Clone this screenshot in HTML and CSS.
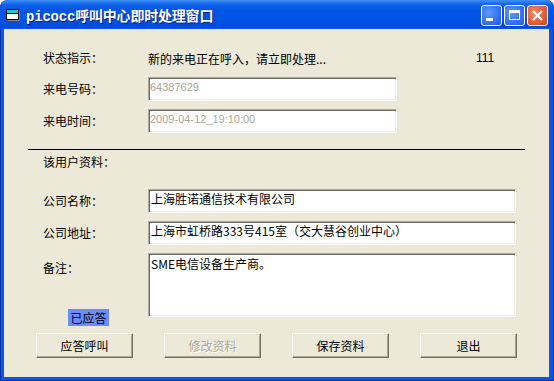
FILE: index.html
```html
<!DOCTYPE html>
<html lang="zh-CN">
<head>
    <meta charset="UTF-8">
    <title>picocc呼叫中心即时处理窗口</title>
    <link rel="stylesheet" href="styles.css">
</head>
<body>
    <div class="window">
        <div class="titlebar">
            <svg class="app-icon" width="16" height="16" viewBox="0 0 16 16">
                <rect x="3" y="4" width="12" height="10" fill="#808080"/>
                <rect x="1.5" y="2.5" width="12" height="10" fill="#fff" stroke="#000"/>
                <rect x="2" y="3" width="11" height="3" fill="#1fc8c8"/>
                <line x1="2" y1="6.5" x2="13" y2="6.5" stroke="#000"/>
            </svg>
            <span class="title">picocc呼叫中心即时处理窗口</span>
            <div class="caption-buttons">
                <span class="cap-btn">
                    <svg width="21" height="21" viewBox="0 0 21 21"><rect x="5" y="13" width="7" height="3" fill="#fff"/></svg>
                </span>
                <span class="cap-btn">
                    <svg width="21" height="21" viewBox="0 0 21 21"><rect x="5.5" y="5.5" width="10" height="9" fill="none" stroke="#fff"/><rect x="5" y="5" width="11" height="3" fill="#fff"/></svg>
                </span>
                <span class="cap-btn close">
                    <svg width="21" height="21" viewBox="0 0 21 21"><path d="M6 6 L15 15 M15 6 L6 15" stroke="#fff" stroke-width="2.2"/></svg>
                </span>
            </div>
        </div>

        <div class="client">
            <div class="row status-row">
                <span class="label">状态指示：</span>
                <span class="status-text">新的来电正在呼入，请立即处理...</span>
                <span class="counter">111</span>
            </div>
            <div class="row">
                <span class="label">来电号码：</span>
                <div class="textbox short disabled">64387629</div>
            </div>
            <div class="row gap">
                <span class="label">来电时间：</span>
                <div class="textbox short disabled">2009-04-12_19:10:00</div>
            </div>

            <hr class="divider">

            <div class="section-title">该用户资料：</div>

            <div class="row company">
                <span class="label">公司名称：</span>
                <div class="textbox wide">上海胜诺通信技术有限公司</div>
            </div>
            <div class="row gap">
                <span class="label">公司地址：</span>
                <div class="textbox wide">上海市虹桥路333号415室（交大慧谷创业中心）</div>
            </div>
            <div class="row gap notes-row">
                <div class="label-col">
                    <span class="label">备注：</span>
                    <span class="badge">已应答</span>
                </div>
                <div class="textbox wide memo">SME电信设备生产商。</div>
            </div>

            <div class="buttons">
                <button class="btn">应答呼叫</button>
                <button class="btn" disabled>修改资料</button>
                <button class="btn">保存资料</button>
                <button class="btn">退出</button>
            </div>
        </div>
    </div>
</body>
</html>
```

FILE: styles.css
```css
body {
    margin: 0;
    padding: 0;
    background-color: #fff;
    font-family: "Noto Sans CJK SC", sans-serif;
    font-size: 12px;
    color: #000;
}
.window {
    width: 554px;
    height: 381px;
    display: flex;
    flex-direction: column;
    background-color: #0a55e5;
    border-radius: 8px 8px 0 0;
    box-shadow: inset 1px 0 #0031a8, inset -1px 0 #0031a8, inset 0 -1px #0031a8;
}
.titlebar {
    height: 29px;
    display: flex;
    align-items: center;
    padding: 0 6px 0 5px;
    border-radius: 8px 8px 0 0;
    background: linear-gradient(#4190f6 0, #2a7cf2 2px, #0b61ea 5px, #0256e6 10px, #0052e2 21px, #0049d8 26px, #0a55e5 29px);
}
.app-icon {
    margin-top: 1px;
}
.title {
    margin-left: 5px;
    font-family: "Liberation Mono", "Noto Sans CJK SC", monospace;
    font-weight: bold;
    font-size: 14px;
    letter-spacing: -0.2px;
    color: #fff;
    text-shadow: 1px 1px #0a1e88;
}
.caption-buttons {
    margin-left: auto;
    margin-top: 2px;
    display: flex;
    gap: 2px;
}
.cap-btn {
    width: 21px;
    height: 21px;
    box-sizing: border-box;
    border: 1px solid #fff;
    border-radius: 3px;
    background: radial-gradient(circle at 35% 35%, #5d97fa, #2d6cf0 70%, #1f5be0);
    display: flex;
    align-items: center;
    justify-content: center;
}
.cap-btn svg {
    flex: none;
}
.cap-btn.close {
    background: radial-gradient(circle at 35% 35%, #f08a64, #e0552c 70%, #c8401c);
}
.client {
    flex: 1;
    margin: 0 5px 4px 4px;
    background-color: #ece9d8;
    padding-top: 21px;
}
.row {
    display: flex;
    align-items: center;
    padding-left: 39px;
}
.row + .row {
    margin-top: 11px;
}
.row.gap {
    margin-top: 8px;
}
.label {
    width: 105px;
    line-height: 16px;
}
.status-row {
    height: 16px;
}
.status-text {
    width: 328px;
}
.counter {
    font-family: "Liberation Sans", sans-serif;
    font-size: 12px;
}
.textbox {
    box-sizing: border-box;
    height: 24px;
    background-color: #fff;
    border: 1px solid;
    border-color: #aca899 #fff #fff #aca899;
    box-shadow: inset 1px 1px #716f64, inset -1px -1px #f1efe2;
    padding: 1px 2px;
    line-height: 16px;
    white-space: nowrap;
}
.short {
    width: 249px;
}
.wide {
    width: 368px;
}
.disabled {
    color: #aca899;
    font-family: "Liberation Sans", sans-serif;
    font-size: 11px;
    padding-left: 1px;
}
.divider {
    margin: 16px 0 0 24px;
    width: 497px;
    height: 0;
    border: none;
    border-top: 1px solid #000;
}
.section-title {
    margin: 4px 0 0 39px;
    line-height: 16px;
}
.row.company {
    margin-top: 19px;
}
.notes-row {
    align-items: flex-start;
}
.label-col {
    width: 105px;
    height: 73px;
    display: flex;
    flex-direction: column;
    justify-content: space-between;
}
.label-col .label {
    margin-top: 7px;
}
.badge {
    margin-left: 25px;
    width: 41px;
    height: 17px;
    line-height: 17px;
    text-align: center;
    background-color: #6b8cff;
}
.memo {
    height: 64px;
    padding-top: 2px;
}
.buttons {
    margin: 7px 0 0 32px;
    display: flex;
    gap: 31px;
}
.btn {
    width: 97px;
    height: 25px;
    box-sizing: border-box;
    padding: 0;
    font-family: "Noto Sans CJK SC", sans-serif;
    font-size: 12px;
    color: #000;
    background-color: #ece9d8;
    border: 1px solid;
    border-color: #fff #716f64 #716f64 #fff;
    box-shadow: inset -1px -1px #aca899;
}
.btn:disabled {
    color: #aca899;
    text-shadow: 1px 1px #fff;
}
```
